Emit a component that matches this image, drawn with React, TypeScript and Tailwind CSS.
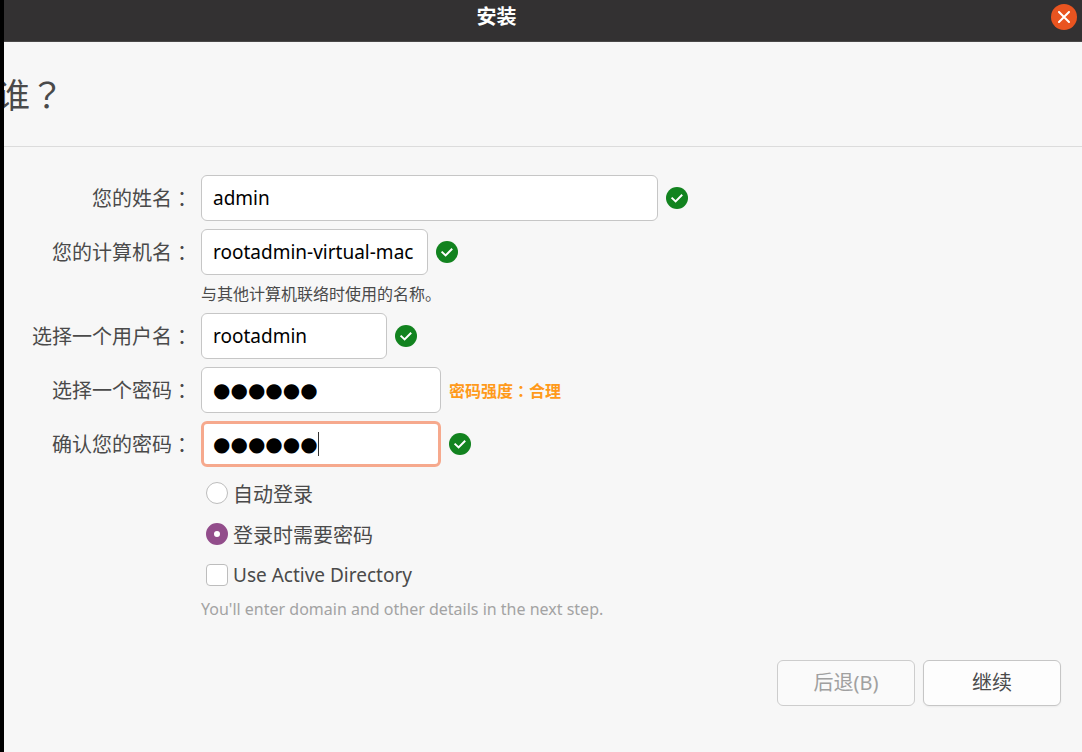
import { useState } from "react";
import type { ReactNode } from "react";

function CheckBadge() {
  return (
    <svg viewBox="0 0 22 22" className="size-[22px] shrink-0" role="img" aria-label="有效">
      <circle cx="11" cy="11" r="11" fill="#12831f" />
      <path
        d="M5.6 10.6l4 3.8 6.6-6.6"
        fill="none"
        stroke="white"
        strokeWidth="2"
      />
    </svg>
  );
}

// The colon sits in the middle of its cell
function Colon() {
  return <span className="font-['Noto_Sans_CJK_JP',sans-serif]">：</span>;
}

function Row({
  id,
  label,
  children,
}: {
  id: string;
  label: string;
  children: ReactNode;
}) {
  return (
    <>
      <label htmlFor={id} className="flex h-[46px] items-center justify-end pt-0.5 text-xl">
        {label}
        <Colon />
      </label>
      <div className="flex h-[46px] items-center gap-2">{children}</div>
    </>
  );
}

const fieldClass =
  "h-[46px] rounded-md border border-[#c6c6c6] bg-white px-[11px] text-[19px] text-black outline-none";

function PasswordField({ id, focused = false }: { id: string; focused?: boolean }) {
  const [value, setValue] = useState("123456");
  return (
    <div className="relative w-60 shrink-0">
      <input
        id={id}
        type="password"
        value={value}
        onChange={(e) => setValue(e.target.value)}
        className={`h-[46px] w-full rounded-md bg-white px-3 text-transparent caret-transparent outline-none ${
          focused ? "border-[3px] border-[#f6a98d]" : "border border-[#c6c6c6]"
        }`}
      />
      <div
        aria-hidden="true"
        className="pointer-events-none absolute inset-0 flex items-center px-3 font-['DejaVu_Sans',sans-serif] text-xl leading-none text-black"
      >
        {"●".repeat(value.length)}
        {focused && <span className="h-6 w-px bg-[#333333]" />}
      </div>
    </div>
  );
}

export default function App() {
  const [name, setName] = useState("admin");
  const [host, setHost] = useState("rootadmin-virtual-mac");
  const [user, setUser] = useState("rootadmin");
  const [login, setLogin] = useState("password");
  const [directory, setDirectory] = useState(false);

  return (
    <div className="flex min-h-screen flex-col overflow-hidden border-l-4 border-black bg-[#f7f7f7] font-['Noto_Sans','Noto_Sans_CJK_SC',sans-serif] text-[#4a4a4a]">
      <header className="grid h-[42px] grid-cols-[1fr_auto_1fr] items-center border-b border-[#4a4849] bg-[#333132] pr-[5px] pb-2 text-white">
        <h1 className="col-start-2 -ml-16 text-xl leading-8 font-bold">安装</h1>
        <button
          type="button"
          aria-label="关闭"
          className="flex size-[26px] items-center justify-center justify-self-end rounded-full bg-[#e95420]"
        >
          <svg viewBox="0 0 12 12" className="size-3">
            <path
              d="M1 1l10 10M11 1L1 11"
              stroke="white"
              strokeWidth="2"
              strokeLinecap="round"
            />
          </svg>
        </button>
      </header>

      <div className="overflow-hidden border-b border-[#dcdcdc] py-8">
        <h2 className="-ml-2 font-['Noto_Sans_CJK_JP',sans-serif] text-[34px] leading-10">谁？</h2>
      </div>

      <form
        className="flex grow flex-col pt-7"
        onSubmit={(e) => e.preventDefault()}
      >
        <div className="grid grid-cols-[188px_1fr] gap-x-[9px] gap-y-2">
          <Row id="name" label="您的姓名">
            <input
              id="name"
              value={name}
              onChange={(e) => setName(e.target.value)}
              className={`w-[457px] ${fieldClass}`}
            />
            <CheckBadge />
          </Row>
          <Row id="host" label="您的计算机名">
            <input
              id="host"
              value={host}
              onChange={(e) => setHost(e.target.value)}
              className={`w-[227px] ${fieldClass}`}
            />
            <CheckBadge />
          </Row>
          <p className="col-start-2 text-base leading-[22px]">
            与其他计算机联络时使用的名称。
          </p>
          <Row id="user" label="选择一个用户名">
            <input
              id="user"
              value={user}
              onChange={(e) => setUser(e.target.value)}
              className={`w-[186px] ${fieldClass}`}
            />
            <CheckBadge />
          </Row>
          <Row id="password" label="选择一个密码">
            <PasswordField id="password" />
            <span className="text-base font-bold text-[#ff9a1a]">
              密码强度
              <Colon />
              合理
            </span>
          </Row>
          <Row id="confirm" label="确认您的密码">
            <PasswordField id="confirm" focused />
            <CheckBadge />
          </Row>

          <div className="col-start-2 flex flex-col gap-[9px] pl-[5px] pt-0.5">
            <label className="flex h-8 items-center gap-[5px] text-xl">
              <input
                type="radio"
                name="login"
                checked={login === "auto"}
                onChange={() => setLogin("auto")}
                className="size-[22px] appearance-none rounded-full border border-[#bdbdbd] bg-white checked:border-8 checked:border-[#924d8b]"
              />
              <span className="pt-1">自动登录</span>
            </label>
            <label className="flex h-8 items-center gap-[5px] text-xl">
              <input
                type="radio"
                name="login"
                checked={login === "password"}
                onChange={() => setLogin("password")}
                className="size-[22px] appearance-none rounded-full border border-[#bdbdbd] bg-white checked:border-8 checked:border-[#924d8b]"
              />
              <span className="pt-1">登录时需要密码</span>
            </label>
            <label className="flex h-8 items-center gap-[5px] text-[19px]">
              <input
                type="checkbox"
                checked={directory}
                onChange={(e) => setDirectory(e.target.checked)}
                className="size-[22px] appearance-none rounded-sm border border-[#bdbdbd] bg-white checked:bg-[#924d8b]"
              />
              Use Active Directory
            </label>
          </div>
          <p className="col-start-2 text-base leading-5 text-[#a3a3a3]">
            You'll enter domain and other details in the next step.
          </p>
        </div>

        <div className="mt-auto flex justify-end gap-2 pr-[21px] pb-[46px] text-xl">
          <button
            type="button"
            disabled
            className="h-[46px] w-[138px] rounded-md border border-[#cdcdcd] bg-[#fafafa] text-[#a0a0a0]"
          >
            后退(B)
          </button>
          <button
            type="submit"
            className="h-[46px] w-[138px] rounded-md border border-[#c6c6c6] bg-[#fdfdfd] shadow-xs"
          >
            继续
          </button>
        </div>
      </form>
    </div>
  );
}
